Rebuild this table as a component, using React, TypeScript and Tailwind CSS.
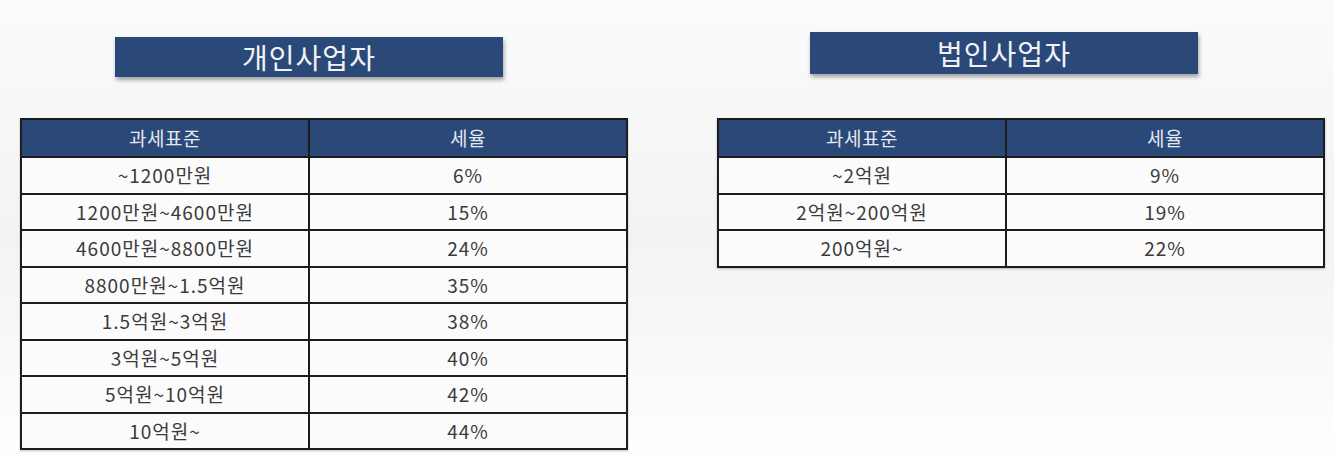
const personal = [
  ["~1200만원", "6%"],
  ["1200만원~4600만원", "15%"],
  ["4600만원~8800만원", "24%"],
  ["8800만원~1.5억원", "35%"],
  ["1.5억원~3억원", "38%"],
  ["3억원~5억원", "40%"],
  ["5억원~10억원", "42%"],
  ["10억원~", "44%"],
];

const corporate = [
  ["~2억원", "9%"],
  ["2억원~200억원", "19%"],
  ["200억원~", "22%"],
];

function Title({ label, className }: { label: string; className: string }) {
  return (
    <div
      className={`flex w-[388px] items-center justify-center bg-[#2b4978] text-[28px] leading-none tracking-[1px] text-[#f1f3f7] shadow-[1px_3px_4px_rgba(0,0,0,0.35)] ${className}`}
    >
      {label}
    </div>
  );
}

function RateTable({ rows }: { rows: string[][] }) {
  return (
    <div className="w-[608px] border-2 border-[#1c1c1c] bg-[#fbfbfb] shadow-[0_1px_2px_rgba(0,0,0,0.25)]">
      <div className="grid h-[36px] grid-cols-[288px_1fr] bg-[#2b4978] text-[19px] tracking-[0.5px] text-[#e3e7ef]">
        <div className="flex items-center justify-center border-r-2 border-[#1c1c1c]">과세표준</div>
        <div className="flex items-center justify-center">세율</div>
      </div>
      {rows.map(([range, rate]) => (
        <div
          key={range}
          className="grid h-[36.5px] grid-cols-[288px_1fr] border-t-2 border-[#1c1c1c] text-[19px] tracking-[1px] text-[#3a3a3a]"
        >
          <div className="flex items-center justify-center border-r-2 border-[#1c1c1c]">{range}</div>
          <div className="flex items-center justify-center">{rate}</div>
        </div>
      ))}
    </div>
  );
}

export default function App() {
  return (
    <div
      className="flex h-[472px] w-[1334px] gap-[89px] bg-gradient-to-b from-[#fbfbfb] via-[#f3f3f3] to-[#ffffff] pl-[20px]"
      style={{ fontFamily: '"Noto Sans CJK KR", "Noto Sans", sans-serif' }}
    >
      <div className="flex flex-col">
        <Title label="개인사업자" className="ml-[95px] mt-[37px] h-[40px]" />
        <div className="mt-[41px]">
          <RateTable rows={personal} />
        </div>
      </div>
      <div className="flex flex-col">
        <Title label="법인사업자" className="ml-[93px] mt-[32px] h-[42px]" />
        <div className="mt-[44px]">
          <RateTable rows={corporate} />
        </div>
      </div>
    </div>
  );
}
